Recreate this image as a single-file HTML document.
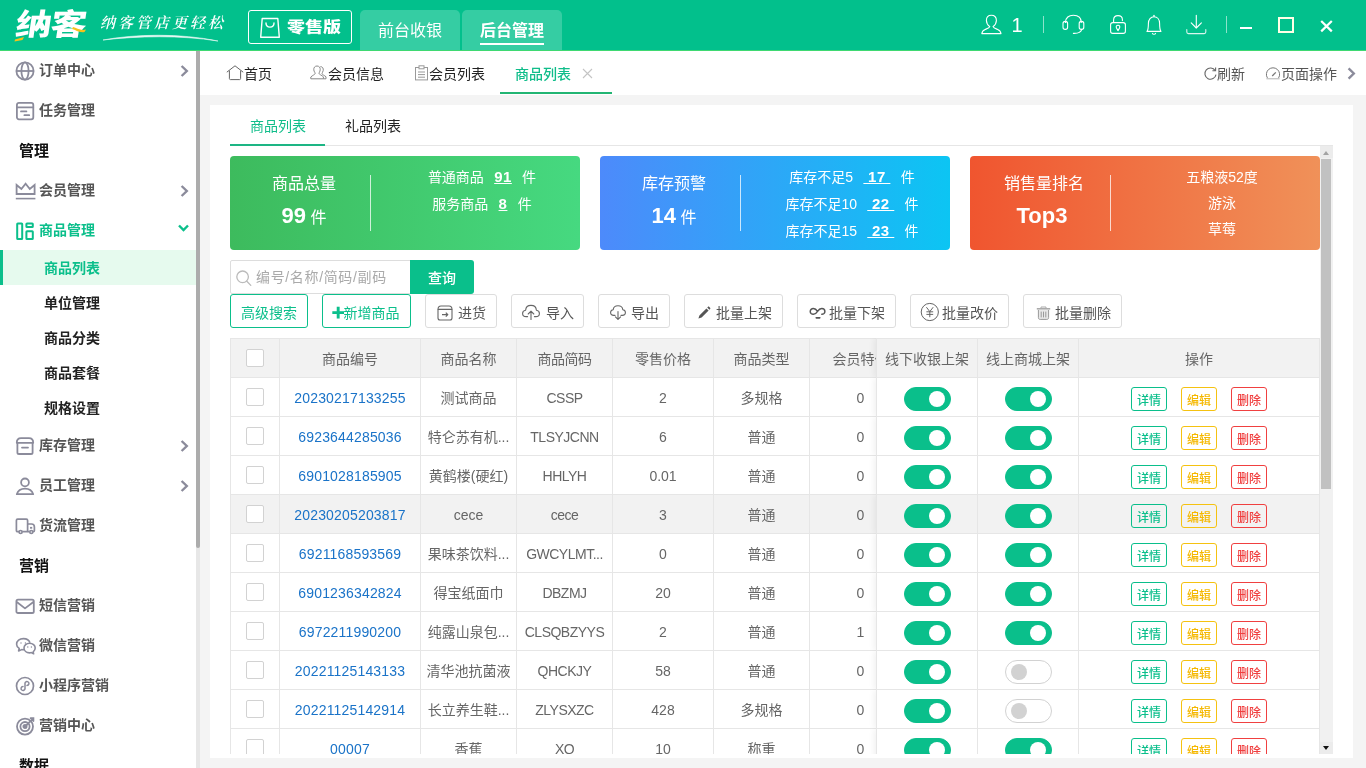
<!DOCTYPE html>
<html lang="zh-CN"><head><meta charset="utf-8"><title>纳客 - 商品列表</title>
<style>
*{box-sizing:border-box;margin:0;padding:0}
html,body{-webkit-font-smoothing:antialiased;width:1366px;height:768px;overflow:hidden;background:#f4f4f4;font-family:"Liberation Sans","Noto Sans CJK SC",sans-serif;font-size:14px;color:#333}
.abs{position:absolute}
/* header */
.hd{position:absolute;left:0;top:0;width:1366px;height:51px;background:#02c08c}
.logo{position:absolute;left:16px;top:5px;font-size:30px;line-height:40px;font-weight:900;color:#fff;letter-spacing:-1px;font-family:"Liberation Sans","Noto Sans CJK SC",sans-serif;transform:scaleX(1.2) skewX(-7deg);transform-origin:0 50%}
.slogan{position:absolute;left:100px;top:11px;font-size:15px;line-height:24px;color:#fff;font-style:italic;font-family:"Liberation Serif","Noto Serif CJK SC",serif;letter-spacing:3px;font-weight:600}
.ver{position:absolute;left:248px;top:10px;width:104px;height:34px;border:1px solid #fff;border-radius:3px;color:#fff;font-size:15px;font-weight:900;line-height:32px;padding-left:38px;font-family:"Liberation Sans","Noto Sans CJK SC",sans-serif}
.htab{position:absolute;top:10px;height:41px;width:100px;background:#35cda3;border-radius:5px 5px 0 0;color:#fff;font-size:16px;line-height:41px;text-align:center}
/* sidebar */
.sb{position:absolute;left:0;top:51px;width:196px;height:717px;background:#fff;overflow:hidden}
.sbt{position:absolute;left:196px;top:51px;width:4px;height:717px;background:#e7e7e7}
.sbs{position:absolute;left:196px;top:51px;width:4px;height:497px;background:#acacac;border-radius:0 0 2px 2px}
.mi{position:absolute;left:0;width:197px;height:40px;line-height:39px;font-size:14px;font-weight:bold;color:#555;padding-left:39px}
.mi>svg:first-child{position:absolute;left:15px;top:10px}
.mi.sec{padding-left:19px;font-size:15px;color:#111;line-height:40px}
.mi.act{color:#0bbf8b}
.si{position:absolute;left:0;width:197px;height:35px;line-height:35px;font-size:14px;font-weight:bold;color:#222;padding-left:44px}
.si.sel{background:#e6faee;color:#0bbf8b;border-left:3px solid #0bbf8b;padding-left:41px;top:199px !important;height:35px;line-height:37px}
.mi svg.chev{position:absolute;left:180px;top:14px}
/* tabs bar */
.tb{position:absolute;left:200px;top:51px;width:1166px;height:44px;background:#fff}
.tb span{position:absolute;top:0;line-height:46px;font-size:14px;color:#222;white-space:nowrap}
.pn{position:absolute;left:210px;top:105px;width:1143px;height:653px;background:#fff}
.htab.cur{font-weight:bold}
.htab.cur i{position:absolute;left:18px;top:33px;width:64px;height:2px;background:#fff}
.hnum{position:absolute;left:1011px;top:13px;font-size:20px;line-height:24px;color:#fff;width:12px;text-align:center}
.hsep{position:absolute;top:16px;width:1px;height:17px;background:rgba(255,255,255,.55)}
.hline{position:absolute;left:0;top:50px;width:1366px;height:1px;background:#3fd972}
.it{position:absolute;top:115px;line-height:22px;font-size:14px;color:#222}
.card{position:absolute;top:156px;width:350px;height:94px;border-radius:4px;color:#fff}
.ct{position:absolute;top:17px;text-align:center;font-size:16px;line-height:22px;white-space:nowrap}
.ct{left:0 !important;width:148px !important}
.cn{position:absolute;top:46px;text-align:center;font-size:16px;line-height:28px;left:0 !important;width:148px !important;white-space:nowrap}
.cn b{font-size:22px}
.cdv{position:absolute;left:140px;top:19px;width:1px;height:56px;background:rgba(255,255,255,.75)}
.cl{position:absolute;left:152px;width:200px;text-align:center;font-size:14px;line-height:24px;white-space:nowrap}
.cl b{font-size:15px;margin:0 2.5px;letter-spacing:.5px}
.srch{position:absolute;left:230px;top:260px;width:181px;height:34px;border:1px solid #ddd;background:#fff;border-radius:2px 0 0 2px}
.srch span{position:absolute;left:25px;top:0;line-height:33px;color:#aaa;font-size:14px;white-space:nowrap;letter-spacing:.65px}
.qry{position:absolute;left:410px;top:260px;width:64px;height:34px;background:#0abf8b;color:#fff;text-align:center;line-height:36px;font-size:14px;border-radius:0 3px 3px 0;font-weight:500}
.btn{position:absolute;top:294px;height:34px;border:1px solid #ddd;border-radius:3px;background:#fff;color:#555;font-size:14px;line-height:37px;white-space:nowrap}
.btn.gr{border-color:#0bbf8b;color:#0bbf8b;text-align:center}
.plus{font-weight:900;font-size:22px;line-height:20px;font-family:"Noto Sans CJK SC",sans-serif;display:inline-block;vertical-align:top;margin-top:6px;margin-right:-1.5px;margin-left:-2px}
/* table */
.tbl{position:absolute;left:0;top:0}
.tr{position:absolute;left:230px;width:1090px;height:39px;background:#fff}
.tr.th,.tr.hov{background:#f2f2f2}
.td{position:absolute;top:0;height:39px;border-right:1px solid #e6e6e6;border-bottom:1px solid #e6e6e6;line-height:40px;text-align:center;font-size:14px;color:#666;white-space:nowrap;overflow:hidden}
.th .td{border-top:1px solid #e6e6e6;height:40px;top:-1px;line-height:40px}
.c0{left:0;width:50px;border-left:1px solid #e6e6e6}
.c1{left:50px;width:141px}.c2{left:191px;width:96px}.c3{left:287px;width:96px}.c4{left:383px;width:101px}.c5{left:484px;width:96px}
.c6{left:580px;width:101px;border-right:none}
.c7{left:646px;width:102px;border-left:1px solid #e6e6e6;background:inherit;box-shadow:-2px 0 6px rgba(0,0,0,.06);clip-path:inset(0 0 0 -12px)}
.c8,.c9{background:inherit}
.tr .c7,.tr .c8,.tr .c9{background-color:#fff}.tr.th .c7,.tr.th .c8,.tr.th .c9,.tr.hov .c7,.tr.hov .c8,.tr.hov .c9{background-color:#f2f2f2}.c8{left:748px;width:101px}.c9{left:849px;width:241px}
.c1 a{color:#1a73c8;letter-spacing:.17px}.c3{letter-spacing:-.5px}
.cb{position:absolute;left:15px;top:10px;width:18px;height:18px;border:1px solid #d2d2d2;border-radius:2px;background:#fff}
.sw{position:absolute;left:27px;top:9px;width:47px;height:24px;border-radius:12px;border:1px solid #d2d2d2;background:#fff}
.sw i{position:absolute;left:5px;top:4px;width:15px;height:15px;border-radius:50%;background:#d2d2d2}
.sw.on{background:#0abf8b;border-color:#0abf8b}
.sw.on i{left:24px;top:3px;width:16px;height:16px;background:#fff}
.ob{position:absolute;top:9px;width:36px;height:24px;border:1px solid;border-radius:3px;font-size:12px;line-height:26px;font-weight:500;text-align:center;background:transparent}
.ob.g{left:52px;color:#0abf8b;border-color:#0abf8b}
.ob.y{left:102px;color:#f5b800;border-color:#f5c211}
.ob.r{left:152px;color:#f04040;border-color:#f04040}
.mask-b{position:absolute;left:200px;top:758px;width:1166px;height:10px;background:#f4f4f4}
.mask-w{position:absolute;left:210px;top:754px;width:1143px;height:4px;background:#fff}
.vs{position:absolute;left:1320px;top:146px;width:13px;height:608px;background:#f1f1f1}
.vs b{position:absolute;left:1px;top:13px;width:10px;height:330px;background:#c1c1c1}
.vs .ub,.vs .db{position:absolute;left:0;width:13px;height:12px;background:#ececec}
.vs .ub{top:0}.vs .db{top:596px}
.vs .up{position:absolute;left:3px;top:5px;border:3.5px solid transparent;border-bottom:4.5px solid #a3a3a3;border-top:none}
.vs .dn{position:absolute;left:3px;top:600px;border:3.5px solid transparent;border-top:4.5px solid #111;border-bottom:none}
.btn svg{margin-top:1px}
#app{position:absolute;left:0;top:0;width:1366px;height:768px;will-change:transform}
.ver span{display:inline-block;transform:scaleX(1.2);transform-origin:0 50%}
.sw:not(.on) i{left:5px;top:3px;width:16px;height:16px}

</style></head><body>
<div id="app">
<div class="hd">
<div class="logo">纳客</div>
<svg class="abs" style="left:14px;top:24px" width="76" height="20" viewBox="0 0 76 20"><path d="M1 15.5 L10 13 L8.5 16 L0.5 17.5Z" fill="#f7c21a"/><path d="M59 3 C63 4 66 7 72 5.5 L70.5 8 C65 9 62 6 58 5Z" fill="#f7c21a"/></svg>
<div class="slogan">纳客管店更轻松</div>
<svg class="abs" style="left:100px;top:33px" width="125" height="10" viewBox="0 0 125 10"><path d="M3 7 C35 1 80 0 118 8 C80 2 38 3 3 7Z" fill="#fff" stroke="#fff" stroke-width=".6" opacity=".9"/></svg>
<div class="ver"><svg class="abs" style="left:10px;top:6px" width="22" height="22" viewBox="0 0 22 22" fill="none" stroke="#fff" stroke-width="1.4" stroke-linejoin="round" stroke-linecap="round"><path d="M3.2 1.5 H18.8 L20.3 20.3 H1.7 Z"/><path d="M7 6 C7 11.5 15 11.5 15 6"/></svg><span>零售版</span></div>
<div class="htab" style="left:360px">前台收银</div>
<div class="htab cur" style="left:462px">后台管理<i></i></div>
<svg class="abs" style="left:980px;top:14px" width="24" height="22" viewBox="0 0 24 22" fill="none" stroke="#fff" stroke-width="1.1" stroke-linejoin="round"><path d="M11.4 1.2 C14.4 1.2 16.4 3.4 16.4 6.4 C16.4 9.2 14.8 11.2 13 12.6 C13.6 14.2 16 14.8 17.6 15.4 C19.6 16.2 20.8 17.6 21 19.6 H1.8 C2 17.6 3.2 16.2 5.2 15.4 C6.8 14.8 9.2 14.2 9.8 12.6 C8 11.2 6.4 9.2 6.4 6.4 C6.4 3.4 8.4 1.2 11.4 1.2Z"/></svg>
<div class="hnum">1</div>
<i class="hsep" style="left:1043px"></i>
<svg class="abs" style="left:1061px;top:13px" width="25" height="23" viewBox="0 0 25 23" fill="none" stroke="#fff" stroke-width="1.1" stroke-linecap="round"><path d="M4.5 9.5 C4.5 4.5 8 2.3 12.3 2.3 C16.6 2.3 20.3 4.5 20.3 9.5"/><rect x="2" y="8.4" width="4.6" height="8" rx="2.2"/><rect x="18.2" y="8.4" width="4.6" height="8" rx="2.2"/><path d="M20.8 16.4 C20 19 17 20.4 13.4 20.4 H12.4"/></svg>
<svg class="abs" style="left:1108px;top:13px" width="20" height="23" viewBox="0 0 20 23" fill="none" stroke="#fff" stroke-width="1.1" stroke-linecap="round"><rect x="2.6" y="9.6" width="14.8" height="10.8" rx="2.2"/><path d="M5.6 9.4 V7 C5.6 4.2 7.6 2.6 10 2.6 C12.4 2.6 14.4 4.2 14.4 6.6 V7.6"/><path d="M10 17.6 L8.6 15.2 C7.6 13.6 8.6 12.2 10 12.2 C11.4 12.2 12.4 13.6 11.4 15.2 Z" stroke-linejoin="round"/></svg>
<svg class="abs" style="left:1144px;top:13px" width="20" height="24" viewBox="0 0 20 24" fill="none" stroke="#fff" stroke-width="1.1" stroke-linecap="round" stroke-linejoin="round"><path d="M10 2.2 V3.6"/><path d="M3 18.4 C4.2 17 4.4 15.6 4.4 10.6 C4.4 6.4 6.8 3.8 10 3.8 C13.2 3.8 15.6 6.4 15.6 10.6 C15.6 15.6 15.8 17 17 18.4 Z"/><path d="M8.4 20.4 C8.8 21.6 11.2 21.6 11.6 20.4"/></svg>
<svg class="abs" style="left:1185px;top:13px" width="23" height="23" viewBox="0 0 23 23" fill="none" stroke="#fff" stroke-width="1.1" stroke-linecap="round" stroke-linejoin="round"><path d="M11.3 2.4 V14.8"/><path d="M6.2 9.8 L11.3 15 L16.4 9.8"/><path d="M1.8 16.6 V19 C1.8 20 2.4 20.6 3.4 20.6 H19.2 C20.2 20.6 20.8 20 20.8 19 V16.6" opacity=".85"/></svg>
<i class="hsep" style="left:1226px"></i>
<i class="abs" style="left:1240px;top:27px;width:12px;height:2px;background:#fff"></i>
<i class="abs" style="left:1278px;top:17px;width:16px;height:16px;border:2px solid #ffffe6"></i>
<svg class="abs" style="left:1319px;top:19px" width="15" height="14" viewBox="0 0 15 14" stroke="#fff" stroke-width="2.2" stroke-linecap="butt"><path d="M2.2 2 L12.8 12.4 M12.8 2 L2.2 12.4"/></svg>
</div>
<div class="hline"></div>

<div class="sb">
<div class="mi" style="top:0"><svg width="20" height="20" viewBox="0 0 20 20" fill="none" stroke="#8b8b9b" stroke-width="1.8"><circle cx="10" cy="10" r="8.6"/><ellipse cx="10" cy="10" rx="3.6" ry="8.6"/><path d="M1.4 10 H18.6"/></svg>订单中心<svg class="chev" width="9" height="12" viewBox="0 0 9 12" fill="none" stroke="#8b8b9b" stroke-width="2.4"><path d="M1.6 1 L6.8 6 L1.6 11"/></svg></div>
<div class="mi" style="top:40px"><svg width="20" height="20" viewBox="0 0 20 20" fill="none" stroke="#8b8b9b" stroke-width="1.8" stroke-linecap="round"><rect x="1.9" y="1.9" width="16.4" height="16.4" rx="2"/><path d="M2 6.4 H18.2"/><path d="M6 10.4 H11.4 M9.4 14.2 H14.2" stroke-width="1.8"/></svg>任务管理</div>
<div class="mi sec" style="top:80px">管理</div>
<div class="mi" style="top:120px"><svg width="22" height="20" viewBox="0 0 22 20" fill="none" stroke="#8b8b9b" stroke-width="1.8" stroke-linejoin="miter"><path d="M1.6 13.6 V4.6 L6.4 8.6 L10.6 3.4 L14.8 8.6 L19.6 4.6 V13.6 Z" transform="translate(0,-0.6)"/><path d="M0.8 17.6 H20.4" stroke-width="1.6"/></svg>会员管理<svg class="chev" width="9" height="12" viewBox="0 0 9 12" fill="none" stroke="#8b8b9b" stroke-width="2.4"><path d="M1.6 1 L6.8 6 L1.6 11"/></svg></div>
<div class="mi act" style="top:160px"><svg width="20" height="20" viewBox="0 0 20 20" fill="none" stroke="#0bbf8b" stroke-width="2"><rect x="2.2" y="2.4" width="5" height="15.6" rx=".6"/><rect x="11.4" y="2.4" width="6.4" height="3.6" rx=".6"/><rect x="11.4" y="10.2" width="6.4" height="7.8" rx=".6"/></svg>商品管理<svg class="abs" style="left:177px;top:13px" width="13" height="9" viewBox="0 0 13 9" fill="none" stroke="#0bbf8b" stroke-width="2.4"><path d="M2 1.5 L6.5 6 L11 1.5"/></svg></div>
<div class="si sel" style="top:200px">商品列表</div>
<div class="si" style="top:235px">单位管理</div>
<div class="si" style="top:270px">商品分类</div>
<div class="si" style="top:305px">商品套餐</div>
<div class="si" style="top:340px">规格设置</div>
<div class="mi" style="top:375px"><svg width="20" height="20" viewBox="0 0 20 20" fill="none" stroke="#8b8b9b" stroke-width="1.8" stroke-linecap="round" stroke-linejoin="round"><path d="M1.8 6.8 C1.8 3.6 3.4 2.2 6 2.2 H14 C16.6 2.2 18.2 3.6 18.2 6.8 Z"/><path d="M2.4 7 V16.4 C2.4 17.4 3 18 4 18 H16 C17 18 17.6 17.4 17.6 16.4 V7"/><path d="M7 11.6 H13" stroke-width="1.8"/></svg>库存管理<svg class="chev" width="9" height="12" viewBox="0 0 9 12" fill="none" stroke="#8b8b9b" stroke-width="2.4"><path d="M1.6 1 L6.8 6 L1.6 11"/></svg></div>
<div class="mi" style="top:415px"><svg width="20" height="20" viewBox="0 0 20 20" fill="none" stroke="#8b8b9b" stroke-width="1.8" stroke-linejoin="round"><circle cx="10" cy="6.4" r="3.9"/><path d="M1.8 18.2 C3 14.4 6 12.6 10 12.6 C14 12.6 17 14.4 18.2 18.2 Z"/></svg>员工管理<svg class="chev" width="9" height="12" viewBox="0 0 9 12" fill="none" stroke="#8b8b9b" stroke-width="2.4"><path d="M1.6 1 L6.8 6 L1.6 11"/></svg></div>
<div class="mi" style="top:455px"><svg width="22" height="20" viewBox="0 0 22 20" fill="none" stroke="#8b8b9b" stroke-width="1.7" stroke-linejoin="round"><path d="M4 15.6 H2.6 C1.8 15.6 1.4 15.2 1.4 14.4 V4.4 C1.4 3.6 1.8 3.2 2.6 3.2 H11.4 C12.2 3.2 12.6 3.6 12.6 4.4 V15.6 H7.2"/><path d="M12.8 8 H16.6 C18.4 8 19.4 9.4 19.4 11 V14.6 C19.4 15.2 19 15.6 18.4 15.6 H18 M14.6 15.6 H12.8"/><circle cx="5.6" cy="16" r="1.5"/><circle cx="16.3" cy="16" r="1.5"/><path d="M15 11.8 H17.2" stroke-width="1.8"/></svg>货流管理</div>
<div class="mi sec" style="top:495px">营销</div>
<div class="mi" style="top:535px"><svg width="20" height="20" viewBox="0 0 20 20" fill="none" stroke="#8b8b9b" stroke-width="1.8" stroke-linejoin="round"><rect x="1.4" y="3.6" width="17.4" height="13.4" rx="1.6"/><path d="M1.8 6 L10 12.4 L18.4 6"/></svg>短信营销</div>
<div class="mi" style="top:575px"><svg width="22" height="20" viewBox="0 0 22 20" fill="none" stroke="#8b8b9b" stroke-width="1.6" stroke-linejoin="round"><path d="M9.2 13.6 C8.6 13.8 7.6 13.8 6.6 13.6 L3.6 15 L4.2 12.4 C2.6 11.4 1.6 9.8 1.6 8.2 C1.6 5 4.6 2.6 8.4 2.6 C11.6 2.6 14.2 4.2 15 6.8"/><path d="M14.6 7.2 C17.8 7.2 20.2 9.4 20.2 12 C20.2 13.6 19.4 14.8 18.2 15.8 L18.6 17.8 L16.4 16.6 C15.8 16.8 15.2 16.9 14.6 16.9 C11.4 16.9 9 14.7 9 12 C9 9.4 11.4 7.2 14.6 7.2Z"/><circle cx="6" cy="7" r=".7" fill="#8b8b9b" stroke="none"/><circle cx="10.4" cy="7" r=".7" fill="#8b8b9b" stroke="none"/><circle cx="12.8" cy="11" r=".7" fill="#8b8b9b" stroke="none"/><circle cx="16.4" cy="11" r=".7" fill="#8b8b9b" stroke="none"/></svg>微信营销</div>
<div class="mi" style="top:615px"><svg width="20" height="20" viewBox="0 0 20 20" fill="none" stroke="#8b8b9b" stroke-width="1.7" stroke-linecap="round"><circle cx="10" cy="10" r="8.5"/><path d="M10 13 V7.4 C10 5.6 12 5.2 13.2 6 C14.6 7 14 9.4 12 9.4 M10 7 V12.6 C10 14.4 8 14.8 6.8 14 C5.4 13 6 10.6 8 10.6" stroke-width="1.5"/></svg>小程序营销</div>
<div class="mi" style="top:655px"><svg width="22" height="20" viewBox="0 0 22 20" fill="none" stroke="#8b8b9b" stroke-width="1.8" stroke-linecap="round"><circle cx="10" cy="10.6" r="8"/><circle cx="10" cy="10.6" r="4.6"/><circle cx="10" cy="10.6" r="1.6" fill="#8b8b9b"/><path d="M10.6 10 L18 2.6 M15.6 2.2 H18.4 V5"/></svg>营销中心</div>
<div class="mi sec" style="top:695px">数据</div>
</div>
<div class="sbt"></div><div class="sbs"></div>

<div class="tb">
<svg class="abs" style="left:26px;top:14px" width="18" height="16" viewBox="0 0 18 16" fill="none" stroke="#666" stroke-width="1"><path d="M0.8 7.2 L9 0.8 L17.2 7.2"/><path d="M3.4 5.6 V13.6 C3.4 14.2 3.8 14.6 4.4 14.6 H13.6 C14.2 14.6 14.6 14.2 14.6 13.6 V5.6"/></svg>
<span style="left:44px">首页</span>
<svg class="abs" style="left:110px;top:14px" width="17" height="16" viewBox="0 0 17 16" fill="none" stroke="#888" stroke-width="1" stroke-linejoin="round"><path d="M7 1 C9.2 1 10.4 2.6 10.2 4.8 C10 6.8 9 7.6 9 8.4 C9 9.4 11.8 10.2 13.4 11.8 V13.8 H0.8 V12 C2.4 10.4 5.2 9.4 5.2 8.4 C5.2 7.6 4 6.8 3.8 4.8 C3.6 2.6 4.8 1 7 1Z"/><path d="M10.4 1.6 C12.6 1.6 13.6 3.4 13.2 5.6 C13 7 12 7.8 12 8.6 C12 9.6 14.6 10.4 16 11.8 V13.8 H13.4"/></svg>
<span style="left:128px">会员信息</span>
<svg class="abs" style="left:214px;top:14px" width="15" height="16" viewBox="0 0 15 16" fill="none" stroke="#999" stroke-width="1"><rect x="1.5" y="2.5" width="12" height="12.4"/><rect x="5" y="0.8" width="5" height="3" fill="#fff"/><path d="M4 7 H11 M4 9.6 H11 M4 12.2 H11"/></svg>
<span style="left:229px">会员列表</span>
<span style="left:315px;color:#10bd8a;font-weight:500">商品列表</span>
<svg class="abs" style="left:382px;top:17px" width="11" height="11" viewBox="0 0 11 11" stroke="#c4c4c4" stroke-width="1.1"><path d="M1 1 L10 10 M10 1 L1 10"/></svg>
<i class="abs" style="left:300px;top:41px;width:112px;height:2px;background:#22b573"></i>
<svg class="abs" style="left:1003px;top:15px" width="15" height="15" viewBox="0 0 15 15" fill="none" stroke="#666" stroke-width="1.1"><path d="M12.2 4.6 A5.6 5.6 0 1 0 13 8.6"/><path d="M9.4 4.8 H12.6 V1.6" stroke-linejoin="miter"/></svg>
<span style="left:1017px;color:#555">刷新</span>
<svg class="abs" style="left:1065px;top:16px" width="16" height="14" viewBox="0 0 16 14" fill="none" stroke="#777" stroke-width="1"><path d="M2.4 10.9 A6.6 6.6 0 1 1 13.6 10.9"/><path d="M1.4 11.7 H14.6" stroke="#c8c8c8" stroke-width="1.4"/><path d="M7.2 9 L10.8 5.4" stroke-width="1.3"/></svg>
<span style="left:1081px;color:#555">页面操作</span>
<svg class="abs" style="left:1147px;top:16px" width="9" height="13" viewBox="0 0 9 13" fill="none" stroke="#8b8b9b" stroke-width="2.4"><path d="M1.6 1.4 L6.8 6.5 L1.6 11.6"/></svg>
</div>
<div class="pn"></div>
<div class="it" style="left:250px;color:#10bd8a">商品列表</div>
<div class="it" style="left:345px">礼品列表</div>
<i class="abs" style="left:230px;top:145px;width:1103px;height:1px;background:#e6e6e6"></i>
<i class="abs" style="left:230px;top:144px;width:95px;height:2px;background:#1db584"></i>

<div class="card" style="left:230px;background:linear-gradient(90deg,#3dbb5d,#46d980)">
<div class="ct" style="left:24px;width:100px">商品总量</div>
<div class="cn" style="left:24px;width:100px"><b>99</b> 件</div>
<i class="cdv"></i>
<div class="cl" style="top:9px">普通商品&nbsp; <b><u>91</u></b> &nbsp;件</div>
<div class="cl" style="top:36px">服务商品&nbsp; <b><u>8</u></b> &nbsp;件</div>
</div>
<div class="card" style="left:600px;background:linear-gradient(90deg,#4d8afb,#0cc5f3)">
<div class="ct" style="left:24px;width:100px">库存预警</div>
<div class="cn" style="left:24px;width:100px"><b>14</b> 件</div>
<i class="cdv"></i>
<div class="cl" style="top:9px">库存不足5&nbsp; <b><u>&nbsp;17&nbsp;</u></b> &nbsp;件</div>
<div class="cl" style="top:36px">库存不足10&nbsp; <b><u>&nbsp;22&nbsp;</u></b> &nbsp;件</div>
<div class="cl" style="top:63px">库存不足15&nbsp; <b><u>&nbsp;23&nbsp;</u></b> &nbsp;件</div>
</div>
<div class="card" style="left:970px;background:linear-gradient(90deg,#f0552f,#f09159)">
<div class="ct" style="left:24px;width:100px">销售量排名</div>
<div class="cn" style="left:24px;width:100px;margin-left:-2px"><b>Top3</b></div>
<i class="cdv"></i>
<div class="cl" style="top:9px">五粮液52度</div>
<div class="cl" style="top:35px">游泳</div>
<div class="cl" style="top:61px">草莓</div>
</div>

<div class="srch"><svg class="abs" style="left:4px;top:8px" width="18" height="18" viewBox="0 0 18 18" fill="none" stroke="#bbb" stroke-width="1.3" stroke-linecap="round"><circle cx="7.6" cy="7.8" r="5.8"/><path d="M11.8 12.2 L15.8 16.4"/></svg><span>编号/名称/简码/副码</span></div>
<div class="qry">查询</div>
<div class="btn gr" style="left:230px;width:78px">高级搜索</div>
<div class="btn gr" style="left:322px;width:89px"><span class="plus">+</span>新增商品</div>
<div class="btn" style="left:425px;width:72px;padding-left:32px"><svg class="abs" style="left:10px;top:8px" width="18" height="18" viewBox="0 0 18 18" fill="none" stroke="#666" stroke-width="1.1" stroke-linejoin="round"><path d="M2 5.4 C2 3 3 2 5 2 H13 C15 2 16 3 16 5.4 Z"/><path d="M2 5.4 V14 C2 15.4 2.8 16 4 16 H14 C15.2 16 16 15.4 16 14 V5.4"/><path d="M6 10.6 H11.6 M9.8 8.6 L11.8 10.6 L9.8 12.6" stroke-width="1.2"/></svg>进货</div>
<div class="btn" style="left:511px;width:73px;padding-left:34px"><svg class="abs" style="left:9px;top:7px" width="20" height="18" viewBox="0 0 20 18" fill="none" stroke="#666" stroke-width="1.1" stroke-linecap="round" stroke-linejoin="round"><path d="M6.6 13.6 H5.2 C3 13.6 1.6 12.2 1.6 10.4 C1.6 8.6 3 7.4 4.6 7.2 C4.8 4.4 7 2.4 10 2.4 C13 2.4 15.2 4.4 15.4 7.2 C17 7.4 18.4 8.6 18.4 10.4 C18.4 12.2 17 13.6 14.8 13.6 H13.4"/><path d="M10 16.4 V8.4 M7.2 11 L10 8.2 L12.8 11"/></svg>导入</div>
<div class="btn" style="left:598px;width:72px;padding-left:32px"><svg class="abs" style="left:10px;top:8px" width="18" height="18" viewBox="0 0 18 18" fill="none" stroke="#666" stroke-width="1.1" stroke-linecap="round" stroke-linejoin="round"><path d="M6 11.4 H4.8 C3 11.4 1.6 10.2 1.6 8.6 C1.6 7 2.8 6 4.2 5.8 C4.4 3.4 6.4 1.8 9 1.8 C11.6 1.8 13.6 3.4 13.8 5.8 C15.2 6 16.4 7 16.4 8.6 C16.4 10.2 15 11.4 13.2 11.4 H12"/><path d="M9 7.6 V15.4 M6.4 12.8 L9 15.4 L11.6 12.8"/></svg>导出</div>
<div class="btn" style="left:684px;width:99px;padding-left:31px"><svg class="abs" style="left:12px;top:9px" width="15" height="15" viewBox="0 0 15 15"><path d="M1.4 13.6 L2.4 10.4 L9.4 3.4 L11.6 5.6 L4.6 12.6 Z M10.2 2.6 L10.9 1.9 C11.3 1.5 11.9 1.5 12.3 1.9 L13.1 2.7 C13.5 3.1 13.5 3.7 13.1 4.1 L12.4 4.8 Z" fill="#555"/></svg>批量上架</div>
<div class="btn" style="left:797px;width:99px;padding-left:31px"><svg class="abs" style="left:10px;top:10px" width="20" height="15" viewBox="0 0 18 13" fill="none" stroke="#555" stroke-width="1.3" stroke-linecap="round"><path d="M8.6 4.6 C7.6 3 6.4 2 4.8 2 C3.2 2 2 3.2 2 4.6 C2 6 3.2 7.2 4.8 7.2 C6.4 7.2 7.6 6.2 8.6 4.6 C9.6 3 10.8 2 12.4 2 C14 2 15.2 3.2 15.2 4.6 C15.2 6 14 7.2 12.4 7.2"/><path d="M7.4 10.4 H10.6" stroke-width="1.5"/></svg>批量下架</div>
<div class="btn" style="left:910px;width:99px;padding-left:31px"><svg class="abs" style="left:9px;top:6px" width="20" height="20" viewBox="0 0 20 20" fill="none" stroke="#666" stroke-width="1"><circle cx="9.8" cy="10" r="8.6"/><path d="M6.4 5.2 L9.8 9.6 L13.2 5.2 M9.8 9.6 V15.2 M6.4 9.8 H13.2 M6.4 12.4 H13.2"/></svg>批量改价</div>
<div class="btn" style="left:1023px;width:99px;padding-left:31px"><svg class="abs" style="left:12px;top:10px" width="15" height="15" viewBox="0 0 15 15" fill="none" stroke="#999" stroke-width="1"><path d="M0.8 2.8 H14.2" stroke-width="1.6" stroke="#aaa"/><path d="M5 2 V1 H10 V2" stroke="#aaa"/><path d="M2.4 4 V11.6 C2.4 12.8 3 13.4 4.2 13.4 H10.8 C12 13.4 12.6 12.8 12.6 11.6 V4" fill="#e8e8e8"/><path d="M5.2 5.6 V11.4 M7.5 5.6 V11.4 M9.8 5.6 V11.4" stroke="#999"/></svg>批量删除</div>

<div class="tbl">
<div class="tr th" style="top:339px"><div class="td c0"><span class="cb"></span></div><div class="td c1">商品编号</div><div class="td c2">商品名称</div><div class="td c3">商品简码</div><div class="td c4">零售价格</div><div class="td c5">商品类型</div><div class="td c6"><span class="clip">会员特价</span></div><div class="td c7">线下收银上架</div><div class="td c8">线上商城上架</div><div class="td c9">操作</div></div>
<div class="tr" style="top:378px">
<div class="td c0"><span class="cb"></span></div><div class="td c1"><a>20230217133255</a></div><div class="td c2">测试商品</div><div class="td c3">CSSP</div><div class="td c4">2</div><div class="td c5">多规格</div><div class="td c6">0</div>
<div class="td c7"><span class="sw on"><i></i></span></div><div class="td c8"><span class="sw on"><i></i></span></div><div class="td c9"><span class="ob g">详情</span><span class="ob y">编辑</span><span class="ob r">删除</span></div>
</div>
<div class="tr" style="top:417px">
<div class="td c0"><span class="cb"></span></div><div class="td c1"><a>6923644285036</a></div><div class="td c2">特仑苏有机...</div><div class="td c3">TLSYJCNN</div><div class="td c4">6</div><div class="td c5">普通</div><div class="td c6">0</div>
<div class="td c7"><span class="sw on"><i></i></span></div><div class="td c8"><span class="sw on"><i></i></span></div><div class="td c9"><span class="ob g">详情</span><span class="ob y">编辑</span><span class="ob r">删除</span></div>
</div>
<div class="tr" style="top:456px">
<div class="td c0"><span class="cb"></span></div><div class="td c1"><a>6901028185905</a></div><div class="td c2">黄鹤楼(硬红)</div><div class="td c3">HHLYH</div><div class="td c4">0.01</div><div class="td c5">普通</div><div class="td c6">0</div>
<div class="td c7"><span class="sw on"><i></i></span></div><div class="td c8"><span class="sw on"><i></i></span></div><div class="td c9"><span class="ob g">详情</span><span class="ob y">编辑</span><span class="ob r">删除</span></div>
</div>
<div class="tr hov" style="top:495px">
<div class="td c0"><span class="cb"></span></div><div class="td c1"><a>20230205203817</a></div><div class="td c2">cece</div><div class="td c3">cece</div><div class="td c4">3</div><div class="td c5">普通</div><div class="td c6">0</div>
<div class="td c7"><span class="sw on"><i></i></span></div><div class="td c8"><span class="sw on"><i></i></span></div><div class="td c9"><span class="ob g">详情</span><span class="ob y">编辑</span><span class="ob r">删除</span></div>
</div>
<div class="tr" style="top:534px">
<div class="td c0"><span class="cb"></span></div><div class="td c1"><a>6921168593569</a></div><div class="td c2">果味茶饮料...</div><div class="td c3">GWCYLMT...</div><div class="td c4">0</div><div class="td c5">普通</div><div class="td c6">0</div>
<div class="td c7"><span class="sw on"><i></i></span></div><div class="td c8"><span class="sw on"><i></i></span></div><div class="td c9"><span class="ob g">详情</span><span class="ob y">编辑</span><span class="ob r">删除</span></div>
</div>
<div class="tr" style="top:573px">
<div class="td c0"><span class="cb"></span></div><div class="td c1"><a>6901236342824</a></div><div class="td c2">得宝纸面巾</div><div class="td c3">DBZMJ</div><div class="td c4">20</div><div class="td c5">普通</div><div class="td c6">0</div>
<div class="td c7"><span class="sw on"><i></i></span></div><div class="td c8"><span class="sw on"><i></i></span></div><div class="td c9"><span class="ob g">详情</span><span class="ob y">编辑</span><span class="ob r">删除</span></div>
</div>
<div class="tr" style="top:612px">
<div class="td c0"><span class="cb"></span></div><div class="td c1"><a>6972211990200</a></div><div class="td c2">纯露山泉包...</div><div class="td c3">CLSQBZYYS</div><div class="td c4">2</div><div class="td c5">普通</div><div class="td c6">1</div>
<div class="td c7"><span class="sw on"><i></i></span></div><div class="td c8"><span class="sw on"><i></i></span></div><div class="td c9"><span class="ob g">详情</span><span class="ob y">编辑</span><span class="ob r">删除</span></div>
</div>
<div class="tr" style="top:651px">
<div class="td c0"><span class="cb"></span></div><div class="td c1"><a>20221125143133</a></div><div class="td c2">清华池抗菌液</div><div class="td c3">QHCKJY</div><div class="td c4">58</div><div class="td c5">普通</div><div class="td c6">0</div>
<div class="td c7"><span class="sw on"><i></i></span></div><div class="td c8"><span class="sw"><i></i></span></div><div class="td c9"><span class="ob g">详情</span><span class="ob y">编辑</span><span class="ob r">删除</span></div>
</div>
<div class="tr" style="top:690px">
<div class="td c0"><span class="cb"></span></div><div class="td c1"><a>20221125142914</a></div><div class="td c2">长立养生鞋...</div><div class="td c3">ZLYSXZC</div><div class="td c4">428</div><div class="td c5">多规格</div><div class="td c6">0</div>
<div class="td c7"><span class="sw on"><i></i></span></div><div class="td c8"><span class="sw"><i></i></span></div><div class="td c9"><span class="ob g">详情</span><span class="ob y">编辑</span><span class="ob r">删除</span></div>
</div>
<div class="tr" style="top:729px">
<div class="td c0"><span class="cb"></span></div><div class="td c1"><a>00007</a></div><div class="td c2">香蕉</div><div class="td c3">XQ</div><div class="td c4">10</div><div class="td c5">称重</div><div class="td c6">0</div>
<div class="td c7"><span class="sw on"><i></i></span></div><div class="td c8"><span class="sw on"><i></i></span></div><div class="td c9"><span class="ob g">详情</span><span class="ob y">编辑</span><span class="ob r">删除</span></div>
</div>
</div>
<div class="mask-w"></div><div class="mask-b"></div>
<div class="vs"><i class="ub"></i><i class="db"></i><i class="up"></i><b></b><i class="dn"></i></div>
</div>
</body></html>
